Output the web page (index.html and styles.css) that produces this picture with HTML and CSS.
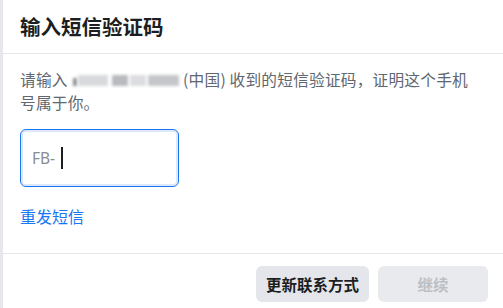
FILE: index.html
```html
<!DOCTYPE html>
<html lang="zh-CN">
<head>
<meta charset="utf-8">
<link rel="stylesheet" href="styles.css">
</head>
<body>
<div class="page">
  <div class="strip"></div>
  <div class="dialog">
    <header class="head">
      <h1 class="title">输入短信验证码</h1>
    </header>
    <main class="body">
      <p class="desc">请输入 <span class="masked"><span class="m m1"></span><span class="m m2"></span><span class="m m3"></span><span class="m m4"></span><span class="m m5"></span></span> (中国) 收到的短信验证码，证明这个手机<br>号属于你。</p>
      <div class="field">
        <span class="prefix">FB-</span><span class="caret"></span>
      </div>
      <a class="link" href="#">重发短信</a>
    </main>
    <footer class="foot">
      <button class="btn btn-update">更新联系方式</button>
      <button class="btn btn-disabled">继续</button>
    </footer>
  </div>
</div>
</body>
</html>
```

FILE: styles.css
```css
* { box-sizing: border-box; }
html, body {
  margin: 0;
  padding: 0;
  background: #fff;
}
body {
  font-family: "Noto Sans CJK SC", "Noto Sans", "Liberation Sans", sans-serif;
  color: #1c1e21;
  width: 503px;
  height: 308px;
  overflow: hidden;
}
.page {
  display: flex;
  height: 308px;
}
.strip {
  width: 3px;
  flex: none;
  background: #e6e7eb;
}
.dialog {
  flex: 1;
  display: flex;
  flex-direction: column;
}
.head {
  height: 54px;
  border-bottom: 1px solid #e4e6eb;
  display: flex;
  align-items: center;
  padding: 0 17px;
}
.title {
  margin: 0;
  font-size: 20.5px;
  font-weight: 700;
  line-height: 24px;
  color: #1c1e21;
  padding-bottom: 1px;
}
.body {
  padding: 14px 17px 0;
  flex: 1;
  display: flex;
  flex-direction: column;
  align-items: flex-start;
}
.desc {
  margin: 0;
  font-size: 15.7px;
  line-height: 23px;
  color: #606770;
  letter-spacing: 0.2px;
}
.masked {
  display: inline-block;
  width: 108px;
  height: 14px;
  vertical-align: -1px;
  position: relative;
}
.m {
  position: absolute;
  top: 2px;
  height: 11px;
  filter: blur(1.5px);
}
.m1 { left: 2px; width: 4px; background: #8a8d91; height: 8px; top: 5px; }
.m2 { left: 7px; width: 30px; background: #d8d9dc; }
.m3 { left: 41px; width: 16px; background: #b8babe; }
.m4 { left: 59px; width: 16px; background: #dcdde0; }
.m5 { left: 77px; width: 31px; background: #c4c6ca; }
.field {
  margin-top: 15px;
  width: 159px;
  height: 58px;
  border: 1.5px solid #1877f2;
  border-radius: 6px;
  box-shadow: inset 0 0 0 2px #dde9fb;
  display: flex;
  align-items: center;
  padding-left: 11px;
}
.prefix {
  font-size: 15.5px;
  color: #8a8d91;
  font-family: "Noto Sans", "Liberation Sans", sans-serif;
}
.caret {
  width: 1.5px;
  height: 22px;
  background: #1c1e21;
  margin-left: 6px;
}
.link {
  margin-top: 18px;
  font-size: 16px;
  line-height: 23px;
  color: #1877f2;
  text-decoration: none;
}
.foot {
  border-top: 1px solid #e4e6eb;
  height: 55px;
  display: flex;
  justify-content: flex-end;
  align-items: flex-start;
  gap: 9px;
  padding: 12px 15px 0 0;
}
.btn {
  height: 36px;
  border: none;
  border-radius: 6px;
  background: #e4e6eb;
  font-family: inherit;
  font-size: 15.5px;
  font-weight: 700;
  color: #1c1e21;
  padding: 0;
  flex: none;
}
.btn-update {
  width: 113px;
}
.btn-disabled {
  width: 110px;
  background: #e9eaed;
  color: #bcc0c4;
}
```
